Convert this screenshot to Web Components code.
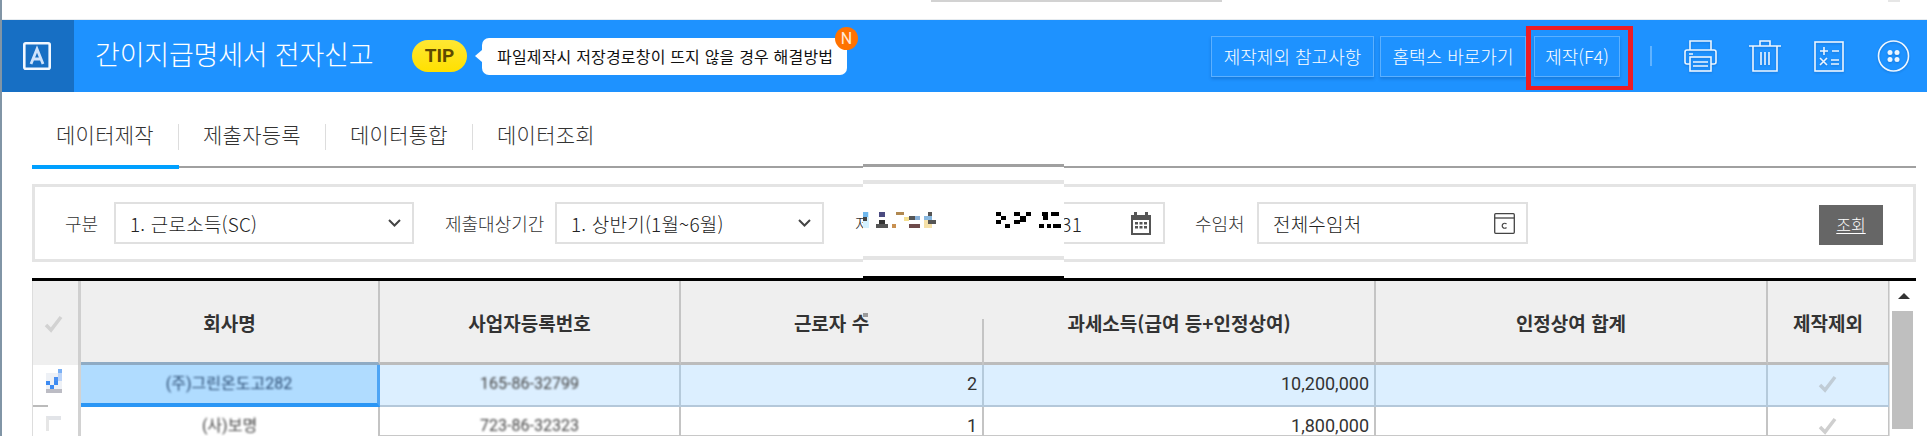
<!DOCTYPE html>
<html lang="ko">
<head>
<meta charset="utf-8">
<title>간이지급명세서 전자신고</title>
<style>
  html,body{margin:0;height:436px;overflow:hidden;background:#fff;}
  body{font-family:"Noto Sans CJK KR","Noto Sans",sans-serif;color:#333;}
</style>
</head>
<body>
<tax-page>
  <tax-header title-text="간이지급명세서 전자신고"></tax-header>
  <tax-tabs></tax-tabs>
  <tax-filter></tax-filter>
  <tax-grid></tax-grid>
  <redact-patch></redact-patch>
</tax-page>

<script>
const FONT = '"Noto Sans CJK KR","Noto Sans",sans-serif';

class taxPage extends HTMLElement {
    constructor(){
        super();
        this.attachShadow({mode:"open"});
        this.shadowRoot.innerHTML = `
        <style>
          :host{display:block;position:relative;height:436px;border-left:2px solid #8195a6;overflow:hidden;
            font-family:${FONT};}
          .top{display:flex;box-sizing:border-box;height:20px;border-bottom:1px solid #e6ebef;padding-left:929px;}
          .top i{display:block;height:2px;background:#d2d2d2;}
        </style>
        <div class="top"><i style="width:291px"></i><i style="width:12px;margin-left:666px;background:#e6e6e6"></i></div>
        <slot></slot>`;
    }
}

class headBtn extends HTMLElement {
    constructor(){
        super();
        this.attachShadow({mode:"open"});
        this.shadowRoot.innerHTML = `
        <style>
          :host{display:block;position:relative;box-sizing:border-box;height:41px;
            border:1px solid rgba(255,255,255,.28);box-shadow:0 2px 3px rgba(0,60,130,.28);
            color:#fff;font-size:18px;font-weight:300;line-height:38px;text-align:center;white-space:nowrap;}
          .mark{display:none;position:absolute;left:-9px;right:-14px;top:-11px;bottom:-14px;
            border:solid #ed1c24;border-width:4px 5px;}
          :host([marked]) .mark{display:block;}
        </style>
        <slot></slot><div class="mark"></div>`;
    }
}

class tipBubble extends HTMLElement {
    constructor(){
        super();
        this.attachShadow({mode:"open"});
        this.shadowRoot.innerHTML = `
        <style>
          :host{display:flex;align-items:center;}
          .pill{width:55px;height:32px;border-radius:16px;background:linear-gradient(#ffe733,#ffe000);
            color:#5f4a00;font:700 19px/32px Roboto,sans-serif;text-align:center;}
          .bubble{position:relative;box-sizing:border-box;width:365px;height:37px;margin-left:15px;padding-left:15px;
            background:#fff;border-radius:7px;color:#111;font-size:16px;line-height:36px;letter-spacing:.18px;white-space:nowrap;}
          .bubble::before{content:"";position:absolute;left:-7px;top:12px;border:6px solid transparent;
            border-left:0;border-right:7px solid #fff;}
          .n{position:absolute;right:-11px;top:-11px;width:23px;height:23px;border-radius:50%;background:#ff7200;
            color:#ffe9d8;font:400 16px/23px Roboto,sans-serif;text-align:center;letter-spacing:0;}
        </style>
        <div class="pill">TIP</div>
        <div class="bubble"><slot></slot><div class="n">N</div></div>`;
    }
}

class taxHeader extends HTMLElement {
    constructor(){
        super();
        this.attachShadow({mode:"open"});
        this.titleText = this.getAttribute("title-text");
        this.shadowRoot.innerHTML = `
        <style>
          :host{display:flex;align-items:center;height:72px;background:#1e92ff;color:#fff;}
          .logo{width:72px;height:72px;background:#176fc4;display:flex;align-items:center;justify-content:center;padding-right:3px;box-sizing:border-box;}
          h1{margin:-4px 0 0 21px;width:317px;font-size:27px;font-weight:300;white-space:nowrap;line-height:72px;letter-spacing:-.2px;}
          .right{margin-left:auto;display:flex;align-items:center;padding-right:17px;}
          .b1{width:163px;} .b2{width:146px;margin-left:6px;} .b3{width:86px;margin-left:8px;}
          .sep{width:2px;height:20px;background:rgba(255,255,255,.3);margin:0 32px 0 30px;}
          svg.ic{display:block;fill:none;stroke:#fff;stroke-width:1.6;filter:drop-shadow(0 1px 1px rgba(0,50,120,.3));opacity:.92;}
        </style>
        <div class="logo">
          <svg width="28" height="28" viewBox="0 0 28 28" fill="none">
            <rect x="1.300" y="1.300" width="25.400" height="25.400" rx="1.500" stroke="#f2f8ff" stroke-width="2.600"/>
            <path d="M8 22 14 7l6 15M10 17h8" stroke="#cfe3fb" stroke-width="2.800"/>
          </svg>
        </div>
        <h1>${this.titleText}</h1>
        <tip-bubble>파일제작시 저장경로창이 뜨지 않을 경우 해결방법</tip-bubble>
        <div class="right">
          <head-btn class="b1">제작제외 참고사항</head-btn>
          <head-btn class="b2">홈택스 바로가기</head-btn>
          <head-btn class="b3" marked>제작(F4)</head-btn>
          <div class="sep"></div>
          <svg class="ic" width="33" height="32" viewBox="0 0 33 32">
            <path d="M6 10V1h21v9"/>
            <path d="M6 24H3a2 2 0 0 1-2-2V12a2 2 0 0 1 2-2h27a2 2 0 0 1 2 2v10a2 2 0 0 1-2 2h-3"/>
            <rect x="6" y="17" width="21" height="14"/>
            <path d="M9 22h15M9 26h15M5 14h4"/>
          </svg>
          <svg class="ic" style="margin-left:32px" width="32" height="32" viewBox="0 0 32 32">
            <path d="M0 6h32M11 6V1h10v5M4 6v25h24V6M12 12v13M16 12v13M20 12v13"/>
          </svg>
          <svg class="ic" style="margin-left:33px" width="30" height="32" viewBox="0 0 30 32">
            <rect x="1" y="2" width="28" height="29"/>
            <path d="M6 11h8M10 7v8M18 11h7M6 18l7 7M13 18l-7 7M17 20h8M17 24h8"/>
          </svg>
          <svg class="ic" style="margin-left:33px" width="33" height="32" viewBox="0 0 33 32">
            <circle cx="16.500" cy="16" r="15"/>
            <g fill="#fff" stroke="none"><circle cx="13" cy="12.500" r="2.500"/><circle cx="20" cy="12.500" r="2.500"/><circle cx="13" cy="19.500" r="2.500"/><circle cx="20" cy="19.500" r="2.500"/></g>
          </svg>
        </div>`;
    }
}

class taxTabs extends HTMLElement {
    constructor(){
        super();
        this.attachShadow({mode:"open"});
        const names = ["데이터제작","제출자등록","데이터통합","데이터조회"];
        this.shadowRoot.innerHTML = `
        <style>
          :host{display:flex;box-sizing:border-box;height:76px;margin:0 11px 0 30px;padding-top:32px;
            border-bottom:2px solid #a0a0a0;}
          .tab{position:relative;box-sizing:border-box;width:147px;height:26px;padding-left:24px;font-size:21px;font-weight:300;
            line-height:21px;letter-spacing:.25px;color:#333;white-space:nowrap;border-right:1px solid #ddd;}
          .tab:last-of-type{border:0;}
          .on::after{content:"";position:absolute;left:0;right:-1px;top:41px;height:4px;background:#00a0ff;}
        </style>
        ${names.map((n,i)=>`<div class="tab ${i==0?'on':''}">${n}</div>`).join("")}`;
    }
}

class fieldBox extends HTMLElement {
    constructor(){
        super();
        this.attachShadow({mode:"open"});
        this.shadowRoot.innerHTML = `
        <style>
          :host{display:flex;flex:none;align-items:center;justify-content:space-between;box-sizing:border-box;height:42px;
            background:#fff;border:2px solid #e0e0e0;padding:0 11px 0 14px;font-size:19px;font-weight:300;letter-spacing:.2px;color:#222;white-space:nowrap;}
        </style>
        <slot></slot><slot name="icon"></slot>`;
    }
}

class taxFilter extends HTMLElement {
    constructor(){
        super();
        this.attachShadow({mode:"open"});
        const chev = `<svg slot="icon" width="13" height="8" viewBox="0 0 13 8" fill="none" stroke="#444" stroke-width="2"><path d="M1 1l5.500 5.500L12 1"/></svg>`;
        this.shadowRoot.innerHTML = `
        <style>
          :host{display:flex;align-items:center;box-sizing:border-box;height:78px;margin:16px 11px 0 30px;
            border:3px solid #e4e4e4;font-size:18px;font-weight:300;color:#333;white-space:nowrap;}
          div{flex:none;}
          .l1{margin-left:30px;width:49px;}
          .s1{width:300px;}
          .l2{margin-left:31px;width:110px;}
          .s2{width:269px;}
          .l3{margin-left:31px;width:146px;}
          .s3{width:164px;justify-content:flex-end;gap:48px;}
          .l4{margin-left:30px;width:62px;}
          .s4{width:271px;}
          .go{margin-left:291px;width:64px;height:40px;background:#666;color:#fff;font-size:16px;font-weight:300;
            text-align:center;line-height:38px;text-decoration:underline;text-underline-offset:2px;margin-top:3px;}
        </style>
        <div class="l1">구분</div>
        <field-box class="s1">1. 근로소득(SC)${chev}</field-box>
        <div class="l2">제출대상기간</div>
        <field-box class="s2">1. 상반기(1월~6월)${chev}</field-box>
        <div class="l3">제출기간</div>
        <field-box class="s3">31
          <svg slot="icon" width="22" height="23" viewBox="0 0 22 23">
            <path fill="#555" d="M1 3h3V0h3v3h8V0h3v3h3v20H1z"/>
            <rect x="3" y="8" width="16" height="13" fill="#fff"/>
            <g fill="#555"><rect x="5" y="10" width="3" height="2.500"/><rect x="9.500" y="10" width="3" height="2.500"/><rect x="14" y="10" width="3" height="2.500"/><rect x="5" y="14" width="3" height="2.500"/><rect x="9.500" y="14" width="3" height="2.500"/><rect x="14" y="14" width="3" height="2.500"/></g>
          </svg>
        </field-box>
        <div class="l4">수임처</div>
        <field-box class="s4">전체수임처
          <svg slot="icon" width="21" height="21" viewBox="0 0 21 21" fill="none" stroke="#444" stroke-width="1.300">
            <rect x=".7" y=".7" width="19.600" height="19.600" rx="1"/><path d="M1 5h19"/>
            <path d="M12.500 11a2.500 2.500 0 1 0 0 3.500" stroke-width="1.200"/>
          </svg>
        </field-box>
        <div class="go">조회</div>`;
    }
}

class taxGrid extends HTMLElement {
    constructor(){
        super();
        this.attachShadow({mode:"open"});
        this.columns = [
            {text:"회사명",cls:"company"},
            {text:"사업자등록번호",cls:""},
            {text:"근로자 수",cls:"workers"},
            {text:"과세소득(급여 등+인정상여)",cls:""},
            {text:"인정상여 합계",cls:""},
            {text:"제작제외",cls:""}
        ];
        this.rows = [
            {name:"(주)그린온도고282",no:"165-86-32799",count:"2",amount:"10,200,000",selected:true},
            {name:"(사)보명",no:"723-86-32323",count:"1",amount:"1,800,000"}
        ];
    }

    check(color){
        return `<svg width="20" height="20" viewBox="0 0 20 20" fill="none" stroke="${color}" stroke-width="3.500"><path d="M2 11l5 5 10-13"/></svg>`;
    }

    // the ticked box is a rough blocky mark in the reference
    ticked(){
        const px = [[0,4,16,16,"#eef1f6"],[12,0,4,4,"#7ab0f5"],[12,4,4,4,"#bcd4f8"],[8,8,4,4,"#4a8ff0"],[12,8,4,4,"#bcd4f8"],
            [0,12,4,4,"#3d8bf2"],[8,12,4,4,"#3d8bf2"],[4,16,4,4,"#3d8bf2"],[0,20,16,4,"#bcbcc4"]];
        return `<svg width="16" height="24">${px.map(p=>`<rect x="${p[0]}" y="${p[1]}" width="${p[2]}" height="${p[3]}" fill="${p[4]}"/>`).join("")}</svg>`;
    }

    getRow(r){
        const cls = r.selected ? "row on" : "row";
        return `
        <div class="c pick ${r.selected?'tick':''}">${r.selected ? this.ticked() : '<span class="box"></span>'}</div>
        <div class="c mid first ${r.selected?'sel':''}"><span class="blur ${r.selected?'dk':''}">${r.name}</span></div>
        <div class="c mid ${cls}"><span class="blur">${r.no}</span></div>
        <div class="c num ${cls}">${r.count}</div>
        <div class="c num ${cls}">${r.amount}</div>
        <div class="c ${cls}"></div>
        <div class="c mid ${cls} last">${this.check(r.selected?"#c0ccd6":"#cfcfcf")}</div>`;
    }

    connectedCallback(){
        this.shadowRoot.innerHTML = `
        <style>
          :host{display:flex;margin:16px 11px 0 30px;border-top:3px solid #000;height:156px;overflow:hidden;}
          .g{flex:none;display:grid;grid-template-columns:48px 299px 301px 303px 392px 392px 122px;
            grid-template-rows:84px 42px 30px;border-left:1px solid #ddd;width:1857px;box-sizing:border-box;}
          .h{position:relative;display:flex;align-items:center;justify-content:center;background:#efefef;font-size:19px;font-weight:700;color:#333;
            box-sizing:border-box;border-right:2px solid #c4c4c4;border-bottom:3px solid #bcbcbc;padding-top:2px;white-space:nowrap;}
          .h.pick{border-right:3px solid #cfcfcf;padding-right:4px;}
          .h.company{border-bottom-color:#8fabc4;}
          .h.workers{border-right-color:transparent;}
          .h.workers::before{content:"";position:absolute;right:-2px;top:38px;bottom:-3px;width:2px;background:#c4c4c4;}
          .h.workers::after{content:"";position:absolute;right:-6px;top:0;height:38px;width:3px;background:#e2e2e2;}
          .blip{position:absolute;left:182px;top:32px;width:5px;height:4px;background:#9a9a9a;}
          .c{display:flex;align-items:flex-start;padding-top:9px;line-height:20px;box-sizing:border-box;border-right:2px solid #c4c4c4;border-bottom:2px solid #c8c8c8;
            font-family:Roboto,${FONT};font-size:18px;font-weight:400;color:#333;}
          .pick{position:relative;justify-content:center;border-right:3px solid #d2d2d2;border-bottom:0;padding-right:4px;}
          .tick{padding-top:4px;}
          .tick::after{content:"";position:absolute;left:0;bottom:0;width:15px;height:2px;background:#bbb;}
          .mid{justify-content:center;}
          .num{justify-content:flex-end;padding-right:5px;}
          .row{background:#fff;}
          .row.on{background:#dcefff;border-bottom-color:#b4c8da;border-right-color:#b5cadb;}
          .sel{background:#b0dcff;border-right:3px solid #4ea5f5;border-bottom:4px solid #2a96f5;}
          .first:not(.sel){border-bottom:0;}
          .blur{filter:blur(1.100px);font-size:16px;font-weight:400;color:#444;white-space:nowrap;}
          .blur.dk{color:#2a4a70;}
          .box{display:block;width:15px;height:15px;border-left:3px solid #e6e6e6;border-top:4px solid #e2e4e8;box-sizing:border-box;}
          .bar{flex:1;position:relative;background:#fff;border-left:1px solid #ddd;}
          .bar::before{content:"";position:absolute;left:8px;top:12px;border:6px solid transparent;border-top:0;border-bottom:6px solid #333;}
          .thumb{position:absolute;left:2px;right:3px;top:30px;height:118px;background:#bfbfbf;}
        </style>
        <div class="g">
          <div class="h pick">${this.check("#d2d2d2")}</div>
          ${this.columns.map(c=>`<div class="h ${c.cls}">${c.text}${c.cls=="workers"?'<span class="blip"></span>':''}</div>`).join("")}
          ${this.rows.map(r=>this.getRow(r)).join("")}
        </div>
        <div class="bar"><div class="thumb"></div></div>`;
    }
}

class redactPatch extends HTMLElement {
    constructor(){
        super();
        this.attachShadow({mode:"open"});
        // pixel blocks left by the redaction, x/y/w/h inside the patch
        const px = [
            [0,48,6,16,"#d4f1ff"],[0,48,5,5,"#70b8ee"],[0,53,4,4,"#444"],
            [16,48,6,5,"#4a4a80"],[16,56,6,4,"#333"],[13,60,12,4,"#555"],
            [33,48,8,3,"#b08850"],[29,60,4,4,"#c89050"],[41,53,5,4,"#f5e090"],
            [46,52,11,4,"#555"],[52,52,5,4,"#88b0d8"],[46,60,11,4,"#6e4a4a"],
            [61,52,8,4,"#88b8e0"],[61,56,8,8,"#f5e0a8"],[65,56,8,4,"#555"],[65,48,4,4,"#555"],
            [133,48,5,4,"#000"],[138,52,5,4,"#000"],[133,56,5,4,"#000"],[142,60,5,4,"#000"],
            [151,48,6,4,"#000"],[157,52,6,6,"#000"],[151,56,6,4,"#000"],[163,48,5,4,"#000"],
            [179,48,6,4,"#000"],[176,60,5,4,"#000"],[188,48,8,4,"#000"],[184,60,4,4,"#000"],[190,60,8,4,"#000"],[180,52,5,4,"#000"]
        ];
        this.shadowRoot.innerHTML = `
        <style>
          :host{position:absolute;left:861px;top:164px;width:201px;height:115px;background:#fff;display:block;}
          .b{position:absolute;left:0;right:0;}
          svg{position:absolute;left:0;top:0;}
        </style>
        <div class="b" style="top:0;height:3px;background:#a0a0a0"></div>
        <div class="b" style="top:16px;height:4px;background:#e4e4e4"></div>
        <div class="b" style="top:92px;height:4px;background:#e4e4e4"></div>
        <div class="b" style="top:112px;height:3px;background:#000"></div>
        <svg width="201" height="115">${px.map(p=>`<rect x="${p[0]}" y="${p[1]}" width="${p[2]}" height="${p[3]}" fill="${p[4]}"/>`).join("")}</svg>`;
    }
}

customElements.define('tax-page', taxPage);
customElements.define('head-btn', headBtn);
customElements.define('tip-bubble', tipBubble);
customElements.define('tax-header', taxHeader);
customElements.define('tax-tabs', taxTabs);
customElements.define('field-box', fieldBox);
customElements.define('tax-filter', taxFilter);
customElements.define('tax-grid', taxGrid);
customElements.define('redact-patch', redactPatch);
</script>
</body>
</html>
